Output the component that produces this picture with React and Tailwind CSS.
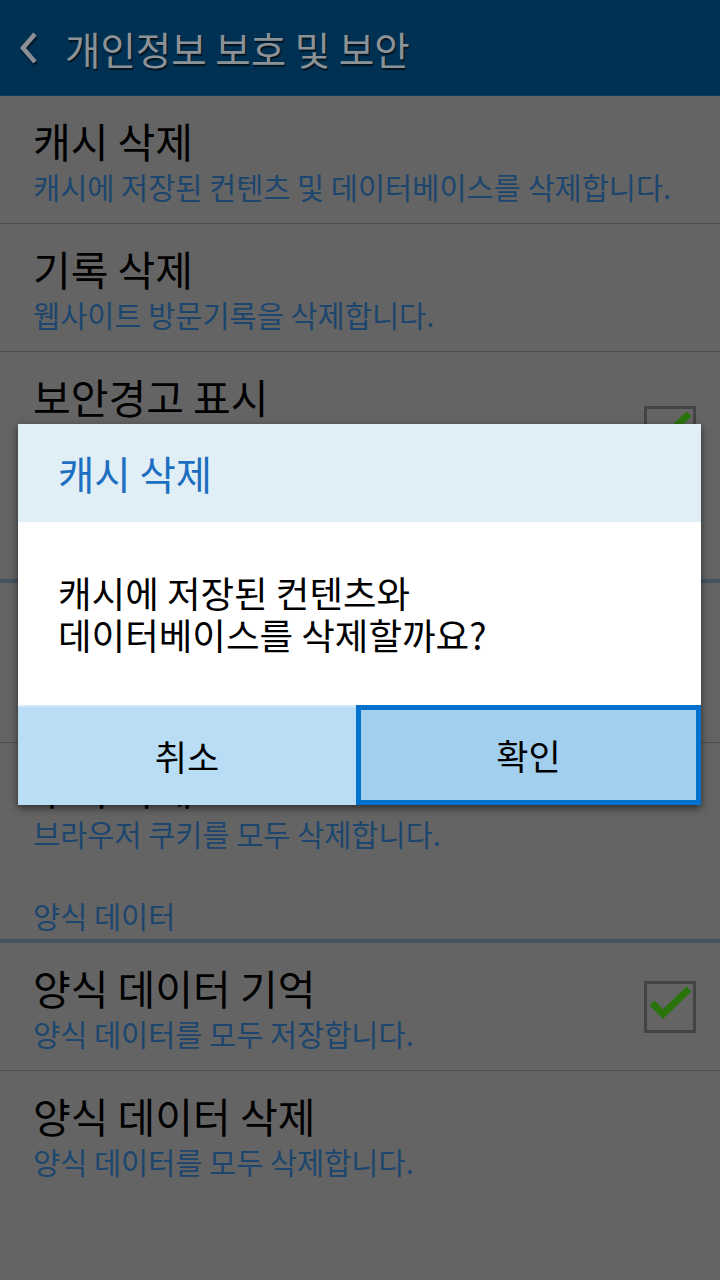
import { Fragment } from 'react';

const FONT = "font-['Noto_Sans_CJK_KR','Noto_Sans',sans-serif]";

function CheckBox() {
  return (
    <div className="w-[52px] h-[52px] border-[3px] border-[#444444] shrink-0 mr-[24px]">
      <svg width="46" height="46" viewBox="0 0 46 46" className="overflow-visible">
        <polyline points="5,19 16,30 42,5" fill="none" stroke="#2a740b" strokeWidth="7" strokeLinecap="butt" />
      </svg>
    </div>
  );
}

function Row({ title, sub, checked, divider, tall }) {
  return (
    <div className={"flex items-center " + (tall ? 'h-[160px] ' : 'h-[128px] ') + (divider ? 'border-b border-[#4d4d4d]' : '')}>
      <div className="flex-1 pl-[33px] self-start pt-[20px]">
        <p className="text-[41px] leading-[48px] text-black">{title}</p>
        {sub.map(function (s, i) {
          return <p key={i} className="text-[29.5px] leading-[44px] text-[#1d466e]">{s}</p>;
        })}
      </div>
      {checked && <CheckBox />}
    </div>
  );
}

function Category({ label, h }) {
  return (
    <Fragment>
      <div className={"flex items-end pl-[33px] pb-[4px] " + h}>
        <p className="text-[29.5px] leading-[40px] text-[#1d466e]">{label}</p>
      </div>
      <div className="h-[4px] bg-[#465461]" />
    </Fragment>
  );
}

export default function App() {
  return (
    <div className={"relative w-[720px] h-[1280px] overflow-hidden bg-[#646464] " + FONT}>
      {/* Action bar */}
      <div className="h-[96px] bg-[#003152] border-b border-[#0c3d60] flex items-center">
        <svg width="22" height="34" viewBox="0 0 22 34" className="ml-[18px] drop-shadow-[1px_2px_1px_rgba(0,0,0,0.6)]">
          <polyline points="17,3 5,17 17,31" fill="none" stroke="#8a9096" strokeWidth="4.5" />
        </svg>
        <h1 className="ml-[25px] text-[38.5px] leading-[46px] text-[#8d9297] [text-shadow:1px_2px_1px_rgba(0,0,0,0.6)]">개인정보 보호 및 보안</h1>
      </div>

      {/* Settings list */}
      <div className="h-[1136px] overflow-hidden">
        <Row title="캐시 삭제" sub={['캐시에 저장된 컨텐츠 및 데이터베이스를 삭제합니다.']} divider />
        <Row title="기록 삭제" sub={['웹사이트 방문기록을 삭제합니다.']} divider />
        <Row title="보안경고 표시" sub={['사이트 보안에 문제가 있으면', '경고 메시지를 표시합니다.']} checked tall />
        <Category label="개인정보" h="h-[67px]" />
        <Row title="쿠키 허용" sub={['사이트에서 쿠키를 저장하고', '읽도록 허용합니다.']} checked tall divider />
        <Row title="쿠키 삭제" sub={['브라우저 쿠키를 모두 삭제합니다.']} />
        <Category label="양식 데이터" h="h-[68px]" />
        <Row title="양식 데이터 기억" sub={['양식 데이터를 모두 저장합니다.']} checked divider />
        <Row title="양식 데이터 삭제" sub={['양식 데이터를 모두 삭제합니다.']} />
        <div className="pl-[33px] pt-[25px]">
          <p className="text-[29.5px] leading-[40px] text-[#1d466e]">웹페이지 양식 데이터를 자동 입력합니다.</p>
        </div>
      </div>

      {/* Dialog */}
      <div className="absolute left-[18px] top-[424px] w-[683px] shadow-[0_3px_8px_rgba(0,0,0,0.55)]">
        <div className="h-[98px] bg-[#e0eef6] flex items-center pl-[40px]">
          <h2 className="text-[39.5px] leading-[46px] text-[#1b6ec0]">캐시 삭제</h2>
        </div>
        <div className="h-[183px] bg-white flex items-center pl-[40px]">
          <p className="text-[36.5px] leading-[42px] text-black">
            캐시에 저장된 컨텐츠와
            <br />
            데이터베이스를 삭제할까요?
          </p>
        </div>
        <div className="flex h-[100px]">
          <button className="w-[338px] bg-[#b9ddf4] border-t-2 border-[#d5eaf8] text-[35px] text-black">취소</button>
          <button className="flex-1 bg-[#a3cfef] border-[5px] border-[#0071cd] text-[35px] text-black">확인</button>
        </div>
      </div>
    </div>
  );
}
